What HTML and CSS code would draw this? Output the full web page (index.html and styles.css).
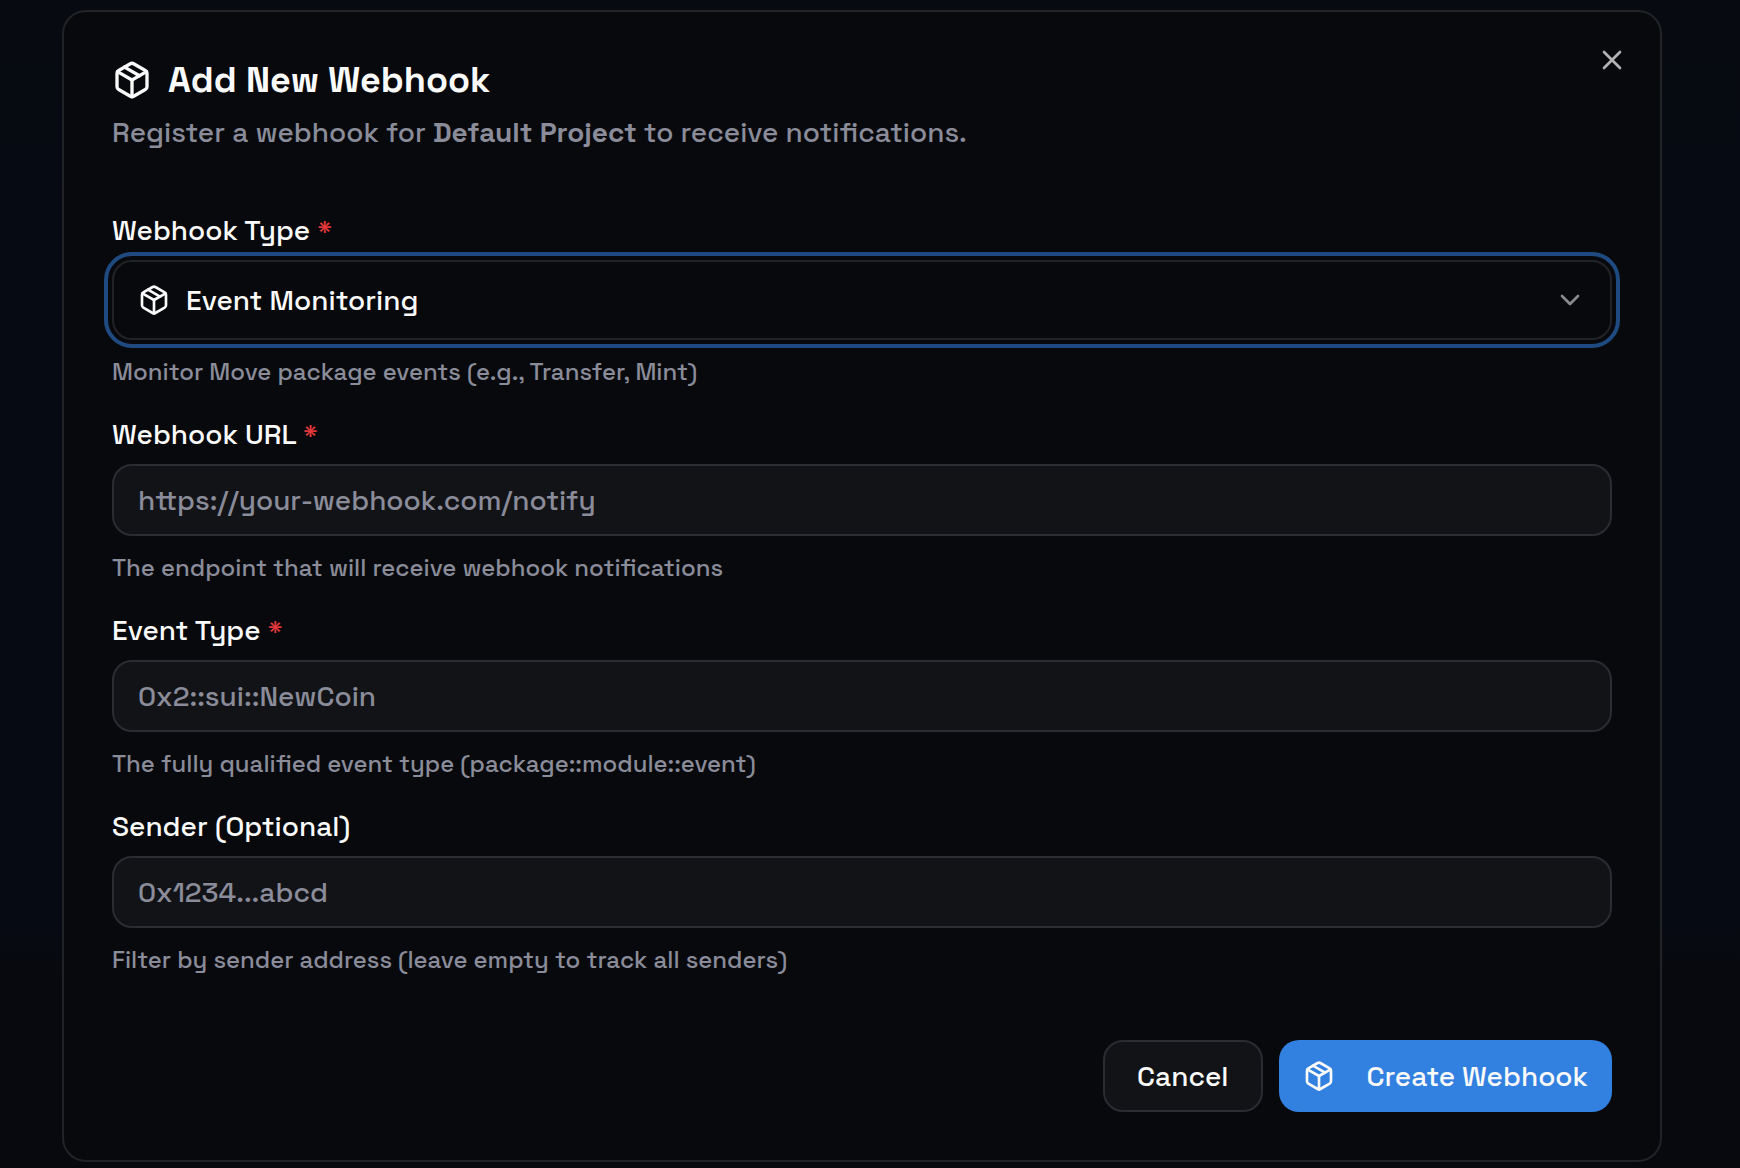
FILE: index.html
```html
<!DOCTYPE html>
<html lang="en">
<head>
  <meta charset="utf-8">
  <title>Add New Webhook</title>
  <meta name="viewport" content="width=device-width, initial-scale=1">
  <link rel="stylesheet" href="styles.css">
</head>
<body>
  <svg class="sprite" aria-hidden="true">
    <symbol id="package" viewBox="0 0 24 24">
      <path d="M11 21.73a2 2 0 0 0 2 0l7-4A2 2 0 0 0 21 16V8a2 2 0 0 0-1-1.73l-7-4a2 2 0 0 0-2 0l-7 4A2 2 0 0 0 3 8v8a2 2 0 0 0 1 1.73z"/>
      <path d="M12 22V12"/>
      <path d="M3.3 7 12 12l8.7-5"/>
      <path d="m7.5 4.27 9 5.15"/>
    </symbol>
  </svg>

  <main class="dialog" role="dialog" aria-labelledby="title">
    <button type="button" class="close" aria-label="Close">
      <svg class="icon" viewBox="0 0 24 24"><path d="M18 6 6 18M6 6l12 12"/></svg>
    </button>

    <header class="header">
      <h1 id="title"><svg class="icon icon-lg"><use href="#package"/></svg>Add New Webhook</h1>
      <p>Register a webhook for <strong>Default Project</strong> to receive notifications.</p>
    </header>

    <form id="webhook-form">
      <div class="field">
        <label for="type">Webhook Type <span class="required">*</span></label>
        <div class="select">
          <svg class="icon select-icon"><use href="#package"/></svg>
          <select id="type">
            <option>Event Monitoring</option>
          </select>
          <svg class="icon select-arrow" viewBox="0 0 24 24"><path d="m6 9 6 6 6-6"/></svg>
        </div>
        <p class="help">Monitor Move package events (e.g., Transfer, Mint)</p>
      </div>

      <div class="field">
        <label for="url">Webhook URL <span class="required">*</span></label>
        <input type="url" id="url" placeholder="https://your-webhook.com/notify">
        <p class="help">The endpoint that will receive webhook notifications</p>
      </div>

      <div class="field">
        <label for="event">Event Type <span class="required">*</span></label>
        <input type="text" id="event" placeholder="0x2::sui::NewCoin">
        <p class="help">The fully qualified event type (package::module::event)</p>
      </div>

      <div class="field">
        <label for="sender">Sender (Optional)</label>
        <input type="text" id="sender" placeholder="0x1234...abcd">
        <p class="help">Filter by sender address (leave empty to track all senders)</p>
      </div>

      <footer class="actions">
        <button type="button" class="btn">Cancel</button>
        <button type="submit" class="btn btn-primary"><svg class="icon"><use href="#package"/></svg>Create Webhook</button>
      </footer>
    </form>
  </main>
</body>
</html>
```
FILE: styles.css
```css
* {
  box-sizing: border-box;
}
body {
  margin: 0;
  padding: 10px 78px 6px 62px;
  min-height: 100vh;
  background: linear-gradient(#070a11, #060a13 30%, #060a13 78%, #08090e 84%);
  color: #fafafa;
  font-family: "Space Grotesk", Inter, sans-serif;
  font-size: 28px;
  font-weight: 500;
  line-height: 28px;
}
h1, p {
  margin: 0;
}
.sprite {
  position: absolute;
  width: 0;
  height: 0;
}
.icon {
  width: 32px;
  height: 32px;
  flex: none;
  fill: none;
  stroke: currentColor;
  stroke-width: 2;
  stroke-linecap: round;
  stroke-linejoin: round;
}
.icon-lg {
  width: 40px;
  height: 40px;
}
.dialog {
  position: relative;
  padding: 48px;
  background: #08090d;
  border: 2px solid #222327;
  border-radius: 24px;
}
.close {
  position: absolute;
  top: 32px;
  right: 32px;
  display: flex;
  padding: 0;
  border: none;
  background: none;
  color: #b3b3b5;
  cursor: pointer;
}
.header {
  display: flex;
  flex-direction: column;
  gap: 12px;
  margin-bottom: 64px;
}
.header h1 {
  display: flex;
  align-items: center;
  gap: 16px;
  font-size: 36px;
  line-height: 40px;
  font-weight: 600;
}
.header p {
  line-height: 40px;
  color: #8a8c99;
}
form {
  display: flex;
  flex-direction: column;
  gap: 32px;
}
.field {
  display: flex;
  flex-direction: column;
  gap: 16px;
}
.required {
  color: #e5383b;
}
.help {
  font-size: 24px;
  line-height: 32px;
  color: #8a8c99;
}
input, select {
  width: 100%;
  height: 72px;
  padding: 0 24px;
  border: 2px solid #2b2c31;
  border-radius: 20px;
  background: #121317;
  color: #fafafa;
  font: inherit;
}
input::placeholder {
  color: #8a8c99;
  opacity: 1;
}
.select {
  position: relative;
}
.select select {
  display: block;
  height: 80px;
  padding: 0 72px;
  appearance: none;
  border-color: #222327;
  background: #08090d;
  line-height: 40px;
  outline: 4px solid #1f4a80;
  outline-offset: 4px;
}
.select-icon, .select-arrow {
  position: absolute;
  top: 24px;
  pointer-events: none;
}
.select-icon {
  left: 26px;
}
.select-arrow {
  right: 26px;
  color: #8a8a8e;
}
.actions {
  display: flex;
  justify-content: flex-end;
  gap: 16px;
  margin-top: 32px;
}
.btn {
  display: flex;
  align-items: center;
  gap: 32px;
  height: 72px;
  padding: 0 32px;
  border: 2px solid #2b2c31;
  border-radius: 20px;
  background: #121317;
  color: #fafafa;
  font: inherit;
  cursor: pointer;
}
.btn-primary {
  padding: 0 24px;
  border: none;
  background: #3281e1;
}
```
